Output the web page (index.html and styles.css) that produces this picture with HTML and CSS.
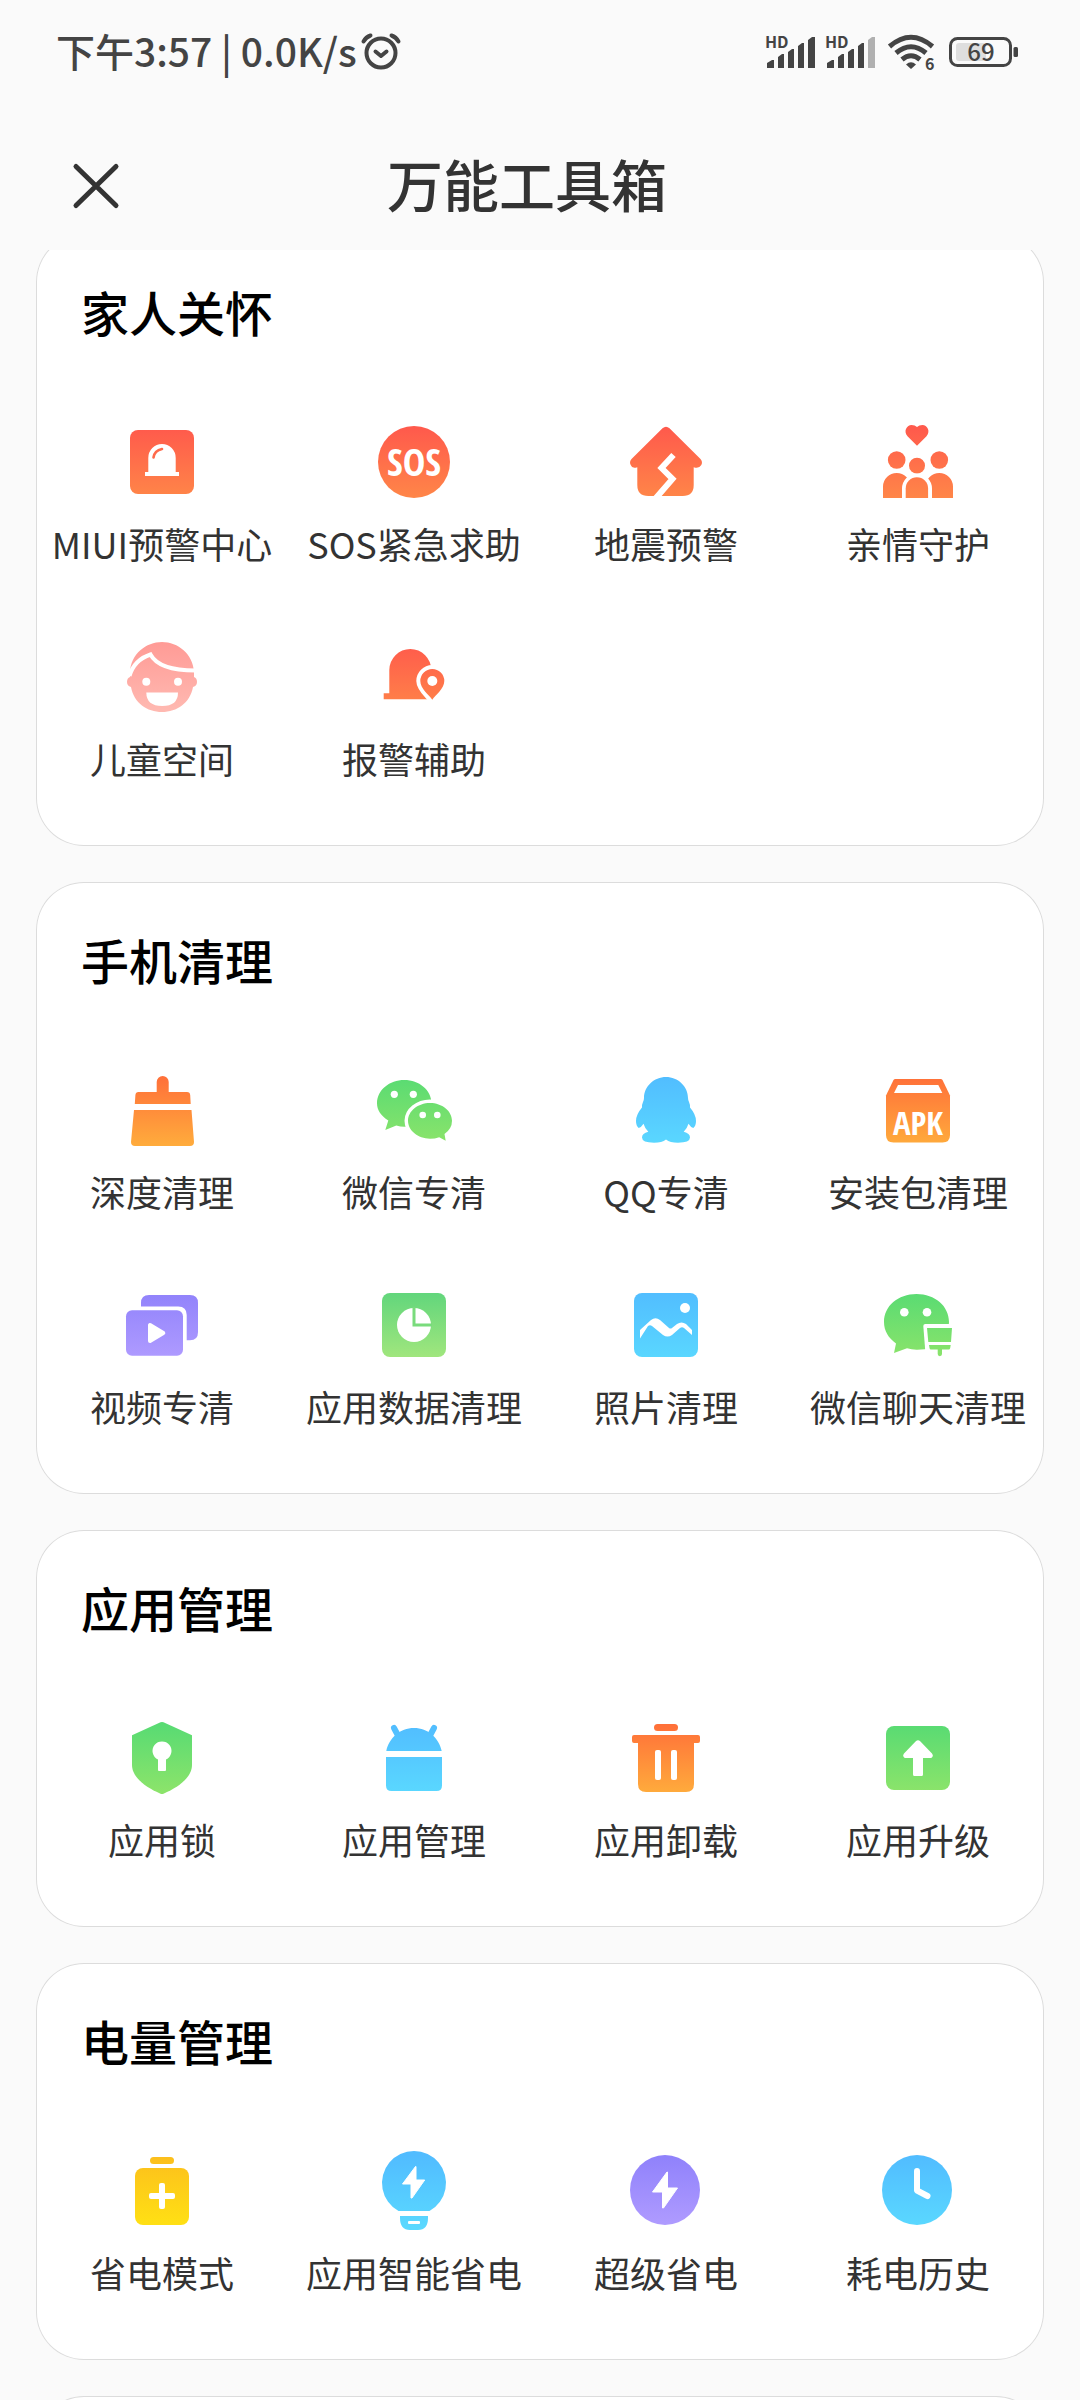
FILE: index.html
```html
<!DOCTYPE html>
<html lang="zh-CN">
<head>
<meta charset="utf-8">
<meta name="viewport" content="width=device-width, initial-scale=1">
<title>万能工具箱</title>
<link rel="stylesheet" href="styles.css">
</head>
<body>
<svg class="defs" aria-hidden="true">
  <defs>
    <linearGradient id="red" gradientUnits="userSpaceOnUse" x1="0" y1="14" x2="0" y2="84"><stop offset="0" stop-color="#ff5a4c"/><stop offset="1" stop-color="#ff8648"/></linearGradient>
    <linearGradient id="pink" gradientUnits="userSpaceOnUse" x1="0" y1="14" x2="0" y2="84"><stop offset="0" stop-color="#ff9b96"/><stop offset="1" stop-color="#ffbab2"/></linearGradient>
    <linearGradient id="orange" gradientUnits="userSpaceOnUse" x1="0" y1="14" x2="0" y2="84"><stop offset="0" stop-color="#ff6f39"/><stop offset="1" stop-color="#ffac3c"/></linearGradient>
    <linearGradient id="green" gradientUnits="userSpaceOnUse" x1="0" y1="14" x2="0" y2="84"><stop offset="0" stop-color="#58db73"/><stop offset="1" stop-color="#8de46a"/></linearGradient>
    <linearGradient id="mint" gradientUnits="userSpaceOnUse" x1="0" y1="16" x2="0" y2="80"><stop offset="0" stop-color="#62d67c"/><stop offset="1" stop-color="#a0e67d"/></linearGradient>
    <linearGradient id="blue" gradientUnits="userSpaceOnUse" x1="0" y1="12" x2="0" y2="84"><stop offset="0" stop-color="#51bcff"/><stop offset="1" stop-color="#5ad8ff"/></linearGradient>
    <linearGradient id="purple" gradientUnits="userSpaceOnUse" x1="0" y1="14" x2="0" y2="82"><stop offset="0" stop-color="#9082fb"/><stop offset="1" stop-color="#af9bff"/></linearGradient>
    <linearGradient id="yellow" gradientUnits="userSpaceOnUse" x1="0" y1="14" x2="0" y2="82"><stop offset="0" stop-color="#fcbf1c"/><stop offset="1" stop-color="#ffe014"/></linearGradient>
  </defs>
</svg>

<div class="status">
  <div class="status-left">
    <span class="status-text">下午3:57 | 0.0K/s</span>
    <svg class="alarm" viewBox="0 0 40 40" aria-hidden="true"><g fill="none" stroke="#444" stroke-width="4" stroke-linecap="round" stroke-linejoin="round"><circle cx="20" cy="21" r="14.500"/><path d="M14.500 19.500l5.500 4.500 5.500-4.500M2.500 9.500Q5 5 9.500 3.500M37.500 9.500Q35 5 30.500 3.500"/></g></svg>
  </div>
  <div class="status-right">
    <svg class="signal" viewBox="0 0 50 40" aria-hidden="true"><text class="hd" x="0" y="16">HD</text><g fill="#444"><path d="M2 36V31l5-3h2v8zM13 36V25l4-3h2v14zM23 36V20l4-3h2v19zM33 36V14l4-3h2v25zM43 36V8l4-3h3v31z"/></g></svg>
    <svg class="signal" viewBox="0 0 50 40" aria-hidden="true"><text class="hd" x="0" y="16">HD</text><g fill="#444"><path d="M2 36V31l5-3h2v8zM13 36V25l4-3h2v14zM23 36V20l4-3h2v19zM33 36V14l4-3h2v25z"/><path fill="#b0b0b0" d="M43 36V8l4-3h3v31z"/></g></svg>
    <svg class="wifi" viewBox="0 0 52 40" aria-hidden="true"><g fill="none" stroke="#444" stroke-width="5"><path d="M4.500 14.500Q26-4 47.500 14.500M11 21Q26 8.500 41 21M17 27.500Q26 20 35 27.500"/></g><path fill="#444" d="M26 37l-5-4.500q5-4.500 10 0z"/><text class="hd" x="40" y="38">6</text></svg>
    <svg class="battery" viewBox="0 0 73 40" aria-hidden="true"><rect x="9" y="11" width="30" height="18" rx="3" fill="#dedede"/><rect x="3.500" y="6.500" width="60" height="27" rx="7" fill="none" stroke="#444" stroke-width="3"/><rect x="66.500" y="15" width="4.500" height="10" rx="1.500" fill="#444"/><text class="level" x="34" y="29">69</text></svg>
  </div>
</div>

<header class="bar">
  <button class="close" type="button" aria-label="关闭"><svg viewBox="0 0 72 72" aria-hidden="true"><path d="M16 16.500l40 39M56 16.500L16 55.500" stroke="#333" stroke-width="5" stroke-linecap="round"/></svg></button>
  <h1>万能工具箱</h1>
</header>

<main class="list">
  <section class="card">
    <h2>家人关怀</h2>
    <ul class="grid">
      <li><button class="tool" type="button"><svg viewBox="0 0 96 96" aria-hidden="true"><rect x="16" y="16" width="64" height="64" rx="8" fill="url(#red)"/><path fill="#fff" d="M31 62v-4h3.300V44a13.700 14 0 0 1 27.400 0v14H65v4z"/><path d="M39.500 43.500q1-7 8.500-8.500" fill="none" stroke="#ff6a4b" stroke-width="2.600" stroke-linecap="round"/></svg><span>MIUI预警中心</span></button></li>
      <li><button class="tool" type="button"><svg viewBox="0 0 96 96" aria-hidden="true"><circle cx="48" cy="48" r="36" fill="url(#red)"/><text class="badge sos" x="48" y="62">SOS</text></svg><span>SOS紧急求助</span></button></li>
      <li><button class="tool" type="button"><svg viewBox="0 0 96 96" aria-hidden="true"><path fill="url(#red)" d="M44.500 14.200q3.500-3 7 0L82.500 45q2.500 3 .8 6-2.300 4-7.600 2.200V71q0 11-11 11H30.300q-11 0-11-11V53.200Q14 55 12.700 51q-1.700-3 .8-6z"/><path d="M55.500 41L43.500 54 54.500 65 37.500 84.500" fill="none" stroke="#fff" stroke-width="6"/></svg><span>地震预警</span></button></li>
      <li><button class="tool" type="button"><svg viewBox="0 0 96 96" aria-hidden="true"><g fill="url(#red)"><path d="M47 31.700L37.500 22.200C33 17 37 11 41.500 11q3.500 0 5.500 2 2-2 5.500-2c4.500 0 8.500 6 4 11.200z"/><circle cx="26.700" cy="46" r="8.800"/><circle cx="69.300" cy="46" r="8.800"/><circle cx="47" cy="51.700" r="8"/><path d="M13 84V72.500a13.700 13.500 0 0 1 27.400 0V84zM55.600 84V72.500a13.700 13.500 0 0 1 27.400 0V84z"/></g><path d="M32 86V74.500a15 15 0 0 1 30 0V86z" fill="#fff"/><path d="M35.700 84V74.500a11.200 11.200 0 0 1 22.400 0V84z" fill="url(#red)"/></svg><span>亲情守护</span></button></li>
      <li><button class="tool" type="button"><svg viewBox="0 0 96 96" aria-hidden="true"><g fill="url(#pink)"><path d="M48 13C64 13 79 25 80 43V48Q83 49 83 53T79 58C76 74 63 83 48 83S20 74 17 58Q13 57 13 53T16 48V43C17 25 32 13 48 13z"/></g><path d="M15.500 47Q20 31 36.500 25.500 45 41.500 81.500 41.500" fill="none" stroke="#fff" stroke-width="4"/><path d="M16 38v9h-2z" fill="#fff"/><circle cx="32.300" cy="52.700" r="4" fill="#fff"/><circle cx="64" cy="52.700" r="4" fill="#fff"/><path d="M32.300 63.500H64q0 13.500-15.800 13.500T32.300 63.500z" fill="#fff"/></svg><span>儿童空间</span></button></li>
      <li><button class="tool" type="button"><svg viewBox="0 0 96 96" aria-hidden="true"><path fill="url(#red)" d="M17.700 70.300v-6h5.600V41a21 21 0 0 1 42 0V70.300z"/><path fill="url(#red)" stroke="#fff" stroke-width="8" paint-order="stroke" d="M66.300 70.700C63 66 54.300 59.500 54.300 52a12 12 0 0 1 24 0C78.300 59.500 69.600 66 66.300 70.700z"/><circle cx="66.300" cy="52" r="5" fill="#fff"/></svg><span>报警辅助</span></button></li>
    </ul>
  </section>

  <section class="card">
    <h2>手机清理</h2>
    <ul class="grid">
      <li><button class="tool" type="button"><svg viewBox="0 0 96 96" aria-hidden="true"><path fill="url(#orange)" d="M42.700 30V20a6 6 0 0 1 12 0v10H73q3 0 3.200 3l.5 9H20.800l.6-9q.3-3 3-3zM20 48h57.500L80 80q0 4-4 4H21q-4 0-4-4z"/></svg><span>深度清理</span></button></li>
      <li><button class="tool" type="button"><svg viewBox="0 0 96 96" aria-hidden="true"><g fill="url(#green)"><path d="M38.300 18C53 18 65.500 28 65.500 41.300S53 64.700 38.300 64.700q-4 0-8-1.200L19.300 68l3-9.500C15 54 11 48 11 41.300 11 28 23.500 18 38.300 18z"/><path stroke="#fff" stroke-width="7" paint-order="stroke" d="M64 41C76 41 86 49 86 58.800q0 8-7.500 13.200l1.200 6.700-6.500-3.500Q69 76.700 64 76.700C52 76.700 42 68.500 42 58.800S52 41 64 41z"/></g><g fill="#fff"><circle cx="28.300" cy="32.300" r="3.600"/><circle cx="47.300" cy="32.300" r="3.600"/><circle cx="56.700" cy="53" r="3.300"/><circle cx="71.300" cy="53" r="3.300"/></g></svg><span>微信专清</span></button></li>
      <li><button class="tool" type="button"><svg viewBox="0 0 96 96" aria-hidden="true"><path fill="url(#blue)" d="M48 15C60 15 70 24.500 70 36q0 2 1 4 1.200 2.500 1 5.500 6 7 6 13.500 0 5-2.700 7-2.500-.5-4.800-4.200-1.500 5-4.800 8Q72 71.500 72 75.500 72 80.700 60 80.700q-8 0-12-3.200-4 3.200-12 3.200-12 0-12-5.200 0-4 6.300-5.700-3.300-3-4.800-8-2.300 3.700-4.800 4.200Q18 64 18 59q0-6.500 6-13.500-.2-3 1-5.500 1-2 1-4C26 24.500 36 15 48 15z"/></svg><span>QQ专清</span></button></li>
      <li><button class="tool" type="button"><svg viewBox="0 0 96 96" aria-hidden="true"><path fill="url(#orange)" d="M25.500 17h45q1.500 0 2 1L80 33.500V73q0 7.500-7.500 7.500h-49Q16 80.500 16 73V33.500L23.500 18q.5-1 2-1z"/><path fill="#fff" d="M28 23h40.300l4 8H24z"/><text class="badge" x="48" y="73">APK</text></svg><span>安装包清理</span></button></li>
      <li><button class="tool" type="button"><svg viewBox="0 0 96 96" aria-hidden="true"><g fill="url(#purple)"><path d="M27 29.500V26q0-8 8-8h41q8 0 8 8v29.300q0 8-8 8h-3.300V38q0-8.500-8.500-8.500z"/><rect x="12" y="33.300" width="57" height="45.400" rx="6"/></g><path fill="#fff" stroke="#fff" stroke-width="4" stroke-linejoin="round" d="M36 48v16l13.300-8z"/></svg><span>视频专清</span></button></li>
      <li><button class="tool" type="button"><svg viewBox="0 0 96 96" aria-hidden="true"><rect x="16" y="16" width="64" height="64" rx="8" fill="url(#mint)"/><circle cx="48" cy="48" r="17" fill="#fff"/><path d="M48 30v18h18" fill="none" stroke="#79db7c" stroke-width="3"/></svg><span>应用数据清理</span></button></li>
      <li><button class="tool" type="button"><svg viewBox="0 0 96 96" aria-hidden="true"><rect x="16" y="16" width="64" height="64" rx="8" fill="url(#blue)"/><circle cx="67" cy="31" r="5" fill="#fff"/><path fill="#fff" d="M22 53L33 43q4.500-3.500 9 0l9 8q1.500 1 3 0l5-4q4.500-3 9 0l6 6v5l-8-7q-2-1.500-4 0l-8 7q-4.500 3.200-9 0l-11-9q-2-1.500-4 0L22 61.500z"/></svg><span>照片清理</span></button></li>
      <li><button class="tool" type="button"><svg viewBox="0 0 96 96" aria-hidden="true"><path fill="url(#green)" d="M46.500 17C65 17 79 29 79 45q0 28-32.500 27.700-5 0-9.500-1.400L24 76l2-9.500C18.500 61 14 54 14 45 14 29 28 17 46.500 17z"/><circle cx="34.300" cy="35.300" r="4.300" fill="#fff"/><circle cx="57" cy="35.300" r="4.300" fill="#fff"/><path fill="#fff" d="M53.300 49q0-2 2-2H84v30H55.500z"/><path fill="url(#green)" d="M57 51h25l-1 14H58.300zM59 68h21.700l-.5 3q-.2 1.500-1.500 1.500H72V77a2.100 2.100 0 0 1-4.300 0v-4.500H61q-1.300 0-1.500-1.500z"/></svg><span>微信聊天清理</span></button></li>
    </ul>
  </section>

  <section class="card">
    <h2>应用管理</h2>
    <ul class="grid">
      <li><button class="tool" type="button"><svg viewBox="0 0 96 96" aria-hidden="true"><path fill="url(#green)" d="M46.500 12.300q1.500-.6 3 0L78 25.300V55c0 12-13 22-28.500 28.700q-1.500.6-3 0C31 77 18 67 18 55V25.300z"/><path fill="#fff" d="M44 60V49.500a9.500 9.500 0 1 1 8 0V60q0 1-1 1h-6q-1 0-1-1z"/></svg><span>应用锁</span></button></li>
      <li><button class="tool" type="button"><svg viewBox="0 0 96 96" aria-hidden="true"><path fill="url(#blue)" d="M20.300 41C23 28 34 18 48 18S73 28 75.700 41zM20 47h56v28.500q0 5.500-5.500 5.500h-45Q20 81 20 75.500z"/><path d="M28 18l4 7.500M68 18l-4 7.500" stroke="url(#blue)" stroke-width="6" stroke-linecap="round"/></svg><span>应用管理</span></button></li>
      <li><button class="tool" type="button"><svg viewBox="0 0 96 96" aria-hidden="true"><g fill="url(#orange)"><rect x="36" y="14" width="24" height="7" rx="3.500"/><path d="M16 25h64q2 0 2 2v4q0 2-2 2h-4v41q0 8-8 8H28q-8 0-8-8V33h-4q-2 0-2-2v-4q0-2 2-2z"/></g><rect x="37" y="40" width="6" height="30" rx="2" fill="#fff"/><rect x="53" y="40" width="6" height="30" rx="2" fill="#fff"/></svg><span>应用卸载</span></button></li>
      <li><button class="tool" type="button"><svg viewBox="0 0 96 96" aria-hidden="true"><rect x="16" y="16" width="64" height="64" rx="8" fill="url(#green)"/><path fill="#fff" d="M45.800 31.300q2.200-2 4.400 0L62 43.500q1.500 2 .5 3.300-.7 1.200-2 1.200H53v16.500q0 1.500-1.500 1.500h-7q-1.500 0-1.500-1.500V48h-7.500q-1.300 0-2-1.200-1-1.300.5-3.300z"/></svg><span>应用升级</span></button></li>
    </ul>
  </section>

  <section class="card">
    <h2>电量管理</h2>
    <ul class="grid">
      <li><button class="tool" type="button"><svg viewBox="0 0 96 96" aria-hidden="true"><rect x="36" y="14" width="24" height="7" rx="3.500" fill="url(#yellow)"/><rect x="21" y="25" width="54" height="57" rx="8" fill="url(#yellow)"/><rect x="35" y="50" width="26" height="6" rx="2" fill="#fff"/><rect x="45" y="40" width="6" height="26" rx="2" fill="#fff"/></svg><span>省电模式</span></button></li>
      <li><button class="tool" type="button"><svg viewBox="0 0 96 96" aria-hidden="true"><path fill="url(#blue)" d="M32.500 68a32 32 0 1 1 31 0zM34 73h28v2q0 12-10 12h-8q-10 0-10-12z"/><rect x="42" y="78" width="12" height="3" rx="1" fill="#fff"/><path fill="#fff" stroke="#fff" stroke-linejoin="round" d="M49.500 23.500L36.500 41H45v14h1L58.700 37H50V23.500z"/></svg><span>应用智能省电</span></button></li>
      <li><button class="tool" type="button"><svg viewBox="0 0 96 96" aria-hidden="true"><circle cx="47" cy="47" r="35" fill="url(#purple)"/><path fill="#fff" stroke="#fff" stroke-linejoin="round" d="M49 29L34.500 49h10v16h1L59.500 45h-10V29z"/></svg><span>超级省电</span></button></li>
      <li><button class="tool" type="button"><svg viewBox="0 0 96 96" aria-hidden="true"><circle cx="47" cy="47" r="35" fill="url(#blue)"/><path d="M47 28v19.500L57.500 53" fill="none" stroke="#fff" stroke-width="6" stroke-linecap="round" stroke-linejoin="round"/></svg><span>耗电历史</span></button></li>
    </ul>
  </section>

  <section class="card next"></section>
</main>
</body>
</html>
```
FILE: styles.css
```css
* { box-sizing: border-box; }

body {
  margin: 0;
  height: 100vh;
  display: flex;
  flex-direction: column;
  background: #fafafa;
  color: #333;
  font-family: "Noto Sans CJK SC", "Noto Sans", sans-serif;
}

.defs { position: absolute; width: 0; height: 0; }
svg { display: block; flex: none; overflow: visible; }

button {
  margin: 0;
  padding: 0;
  border: 0;
  background: none;
  color: inherit;
  font: inherit;
}

/* Status bar */
.status {
  flex: none;
  height: 104px;
  padding: 0 60px 0 56px;
  display: flex;
  align-items: center;
  justify-content: space-between;
  color: #444;
}
.status-left { display: flex; align-items: center; gap: 4px; }
.status-text {
  padding-bottom: 4px;
  font-size: 39px;
  line-height: 48px;
  font-weight: 500;
  white-space: nowrap;
}
.status-right { display: flex; align-items: center; gap: 10px; }
.alarm { width: 40px; height: 40px; }
.signal { width: 50px; height: 40px; }
.wifi { width: 52px; height: 40px; }
.battery { width: 73px; height: 40px; }
.hd { font: 700 16px "Noto Sans CJK SC", sans-serif; fill: #444; }
.level { font: 500 24px "Noto Sans CJK SC", sans-serif; fill: #444; text-anchor: middle; }

/* Title bar */
.bar {
  flex: none;
  height: 146px;
  padding: 17px 86px 0 60px;
  display: grid;
  grid-template-columns: 72px 1fr 72px;
  align-items: center;
}
.close svg { width: 72px; height: 72px; }
h1 {
  margin: 0 0 6px;
  font-size: 56px;
  line-height: 72px;
  font-weight: 500;
  text-align: center;
}

/* Scrolling list, with the first card partly under the title bar */
.list {
  flex: 1;
  min-height: 0;
  padding: 0 36px;
  overflow-y: auto;
  scrollbar-width: none;
  display: flex;
  flex-direction: column;
  gap: 36px;
}
.card {
  flex: none;
  padding: 45px 0 30px;
  border-radius: 48px;
  background: #fff;
  box-shadow: inset 0 0 0 1px #dcdcdc;
}
.card:first-child { margin-top: -16px; }
.next { height: 396px; }

h2 {
  margin: 0 0 43px;
  padding-left: 45px;
  font-size: 48px;
  line-height: 64px;
  font-weight: 500;
  color: #000;
}

.grid {
  margin: 0;
  padding: 0;
  list-style: none;
  display: grid;
  grid-template-columns: repeat(4, 1fr);
}
.tool {
  width: 100%;
  padding: 28px 0 34px;
  display: flex;
  flex-direction: column;
  align-items: center;
  gap: 9px;
  font-size: 36px;
  line-height: 48px;
  white-space: nowrap;
}
.tool svg { width: 96px; height: 96px; }
.badge {
  font: 700 33px "Liberation Sans Narrow", "Open Sans Condensed", "DejaVu Sans Condensed", "Liberation Sans", sans-serif;
  fill: #fff;
  text-anchor: middle;
}
.sos { font-size: 38px; }
```
